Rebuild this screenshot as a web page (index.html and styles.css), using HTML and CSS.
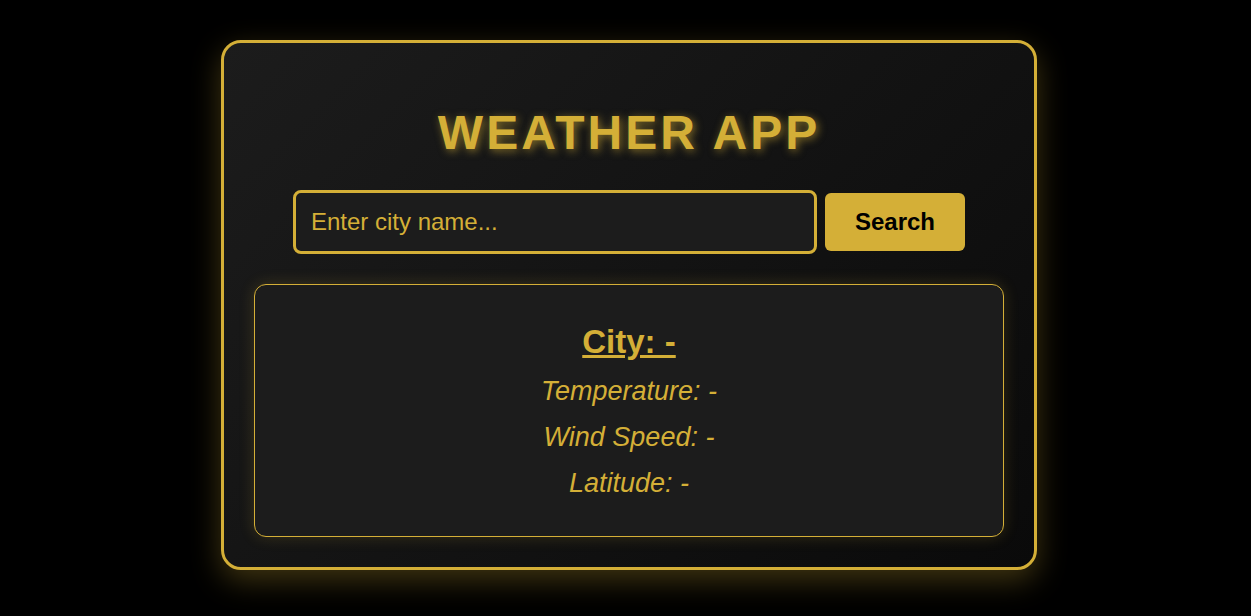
FILE: index.html
```html
<!DOCTYPE html>
<html lang="en">
<head>
<meta charset="utf-8">
<title>Weather App</title>
<link rel="stylesheet" href="styles.css">
</head>
<body>
<div class="card">
  <h1 class="title">WEATHER APP</h1>
  <div class="search">
    <input class="city-input" type="text" placeholder="Enter city name...">
    <button class="search-btn">Search</button>
  </div>
  <div class="info">
    <h2 class="city">City: -</h2>
    <p class="line">Temperature: -</p>
    <p class="line">Wind Speed: -</p>
    <p class="line">Latitude: -</p>
  </div>
</div>
</body>
</html>
```
FILE: styles.css
```css
html, body {
  margin: 0;
  height: 100%;
}
body {
  background: #000;
  font-family: "Liberation Sans", Arial, sans-serif;
  color: #d4af37;
  display: flex;
  justify-content: center;
  align-items: flex-start;
  padding: 40px 0 0 7px;
  box-sizing: border-box;
  overflow: hidden;
}
.card {
  width: 750px;
  padding: 30px;
  border: 3px solid #d4af37;
  border-radius: 20px;
  background: linear-gradient(135deg, #1c1c1c 0%, #0a0a0a 100%);
  box-shadow: 0 10px 30px rgba(212, 175, 55, 0.3);
  text-align: center;
}
.title {
  margin: 32px 0 30px;
  font-size: 48px;
  font-weight: bold;
  letter-spacing: 3px;
  color: #d4af37;
  text-shadow: 2px 2px 8px rgba(212, 175, 55, 0.6);
  line-height: normal;
}
.search {
  display: flex;
  justify-content: center;
  align-items: center;
  gap: 8px;
}
.city-input {
  box-sizing: border-box;
  width: 524px;
  padding: 15px;
  font-family: "Liberation Sans", Arial, sans-serif;
  font-size: 24px;
  color: #d4af37;
  background: #1c1c1c;
  border: 3px solid #d4af37;
  border-radius: 8px;
  outline: none;
}
.city-input::placeholder {
  color: #d4af37;
  opacity: 1;
}
.search-btn {
  padding: 15px 30px;
  font-family: "Liberation Sans", Arial, sans-serif;
  font-size: 24px;
  font-weight: bold;
  color: #000;
  background: #d4af37;
  border: none;
  border-radius: 6px;
  cursor: pointer;
}
.info {
  margin-top: 30px;
  padding: 23px 20px 22px;
  border: 1px solid #d4af37;
  border-radius: 12px;
  background: #1c1c1c;
  box-shadow: 0 0 15px rgba(212, 175, 55, 0.2);
}
.city {
  margin: 15px 0;
  font-size: 33px;
  font-weight: bold;
  text-decoration: underline;
}
.line {
  margin: 15px 0;
  font-size: 27px;
  font-style: italic;
}
```
